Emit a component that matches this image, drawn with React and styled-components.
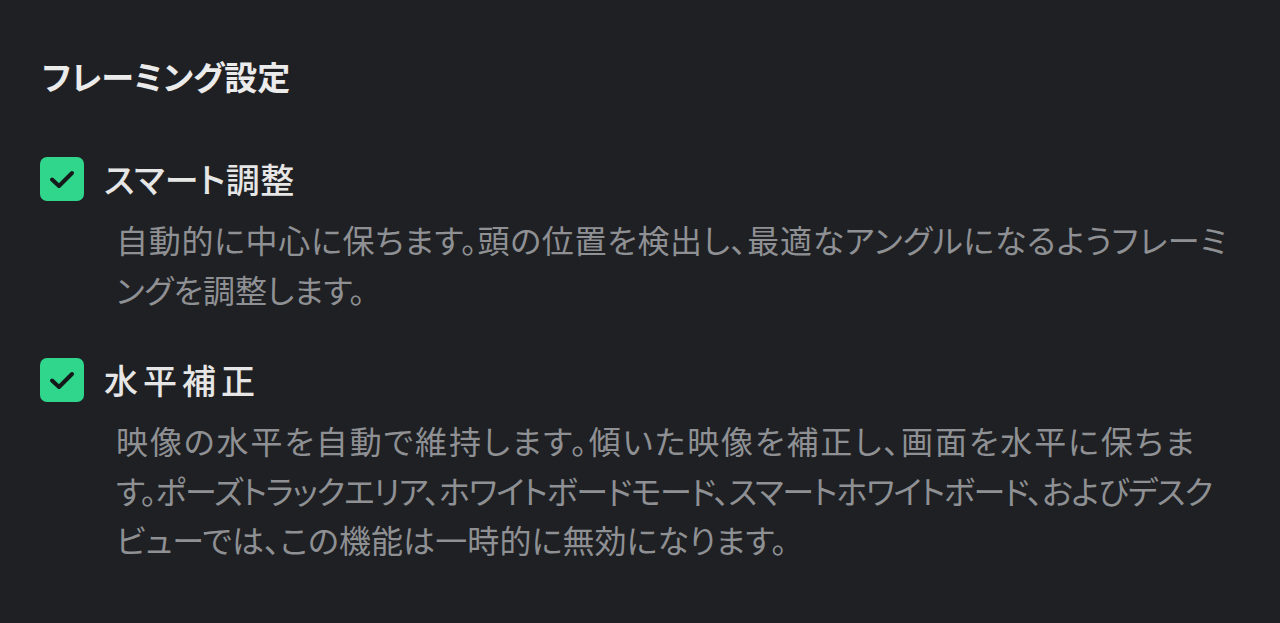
import React from "react";
import styled, { createGlobalStyle } from "styled-components";

const Global = createGlobalStyle`
  html, body { margin: 0; padding: 0; background: #1f2023; }
  body { font-family: "Noto Sans CJK JP", "Noto Sans", sans-serif; }
`;

const Page = styled.div`
  width: 1280px;
  height: 623px;
  box-sizing: border-box;
  background: #1f2023;
  padding: 51px 40px 0 40px;
  display: flex;
  flex-direction: column;
  font-feature-settings: "palt";
`;

const Title = styled.h2`
  margin: 0 0 0 2px;
  font-size: 33px;
  line-height: 50px;
  font-weight: 700;
  color: #ebebeb;
`;

const Options = styled.div`
  display: flex;
  flex-direction: column;
  gap: 44px;
  margin-top: 56px;
`;

const Option = styled.div`
  display: flex;
  flex-direction: column;
`;

const Header = styled.label`
  display: flex;
  align-items: center;
  gap: 20px;
  height: 44px;
`;

const Box = styled.span`
  width: 44px;
  height: 44px;
  border-radius: 7px;
  background: #2fd68c;
  display: flex;
  align-items: center;
  justify-content: center;
  flex: none;
`;

const Label = styled.span`
  font-size: 34px;
  font-weight: 500;
  color: #e6e6e6;
  line-height: 44px;
  letter-spacing: ${(p) => p.$spacing}px;
`;

const Desc = styled.p`
  margin: 14px 0 0 76px;
  font-size: 32px;
  line-height: 49.5px;
  color: #8e9094;
  white-space: nowrap;
`;

const Line = styled.span`
  display: block;
  letter-spacing: ${(p) => p.$spacing || 0}px;
`;

const Check = () => (
  <svg width="28" height="22" viewBox="0 0 28 22" fill="none">
    <path d="M4 11.5 L11 18 L24 5" stroke="#15191a" strokeWidth="4" strokeLinecap="round" strokeLinejoin="round" />
  </svg>
);

const options = [
  {
    label: "スマート調整",
    spacing: 0.5,
    lines: [
      ["自動的に中心に保ちます。頭の位置を検出し、最適なアングルになるようフレーミ", 0.7],
      ["ングを調整します。", 0],
    ],
  },
  {
    label: "水平補正",
    spacing: 5,
    lines: [
      ["映像の水平を自動で維持します。傾いた映像を補正し、画面を水平に保ちま", 1.9],
      ["す。ポーズトラックエリア、ホワイトボードモード、スマートホワイトボード、およびデスク", -1.15],
      ["ビューでは、この機能は一時的に無効になります。", 0.1],
    ],
  },
];

export default function App() {
  return (
    <>
      <Global />
      <Page>
        <Title>フレーミング設定</Title>
        <Options>
          {options.map((o) => (
            <Option key={o.label}>
              <Header>
                <Box><Check /></Box>
                <Label $spacing={o.spacing}>{o.label}</Label>
              </Header>
              <Desc>
                {o.lines.map(([t, s]) => (
                  <Line key={t} $spacing={s}>{t}</Line>
                ))}
              </Desc>
            </Option>
          ))}
        </Options>
      </Page>
    </>
  );
}
